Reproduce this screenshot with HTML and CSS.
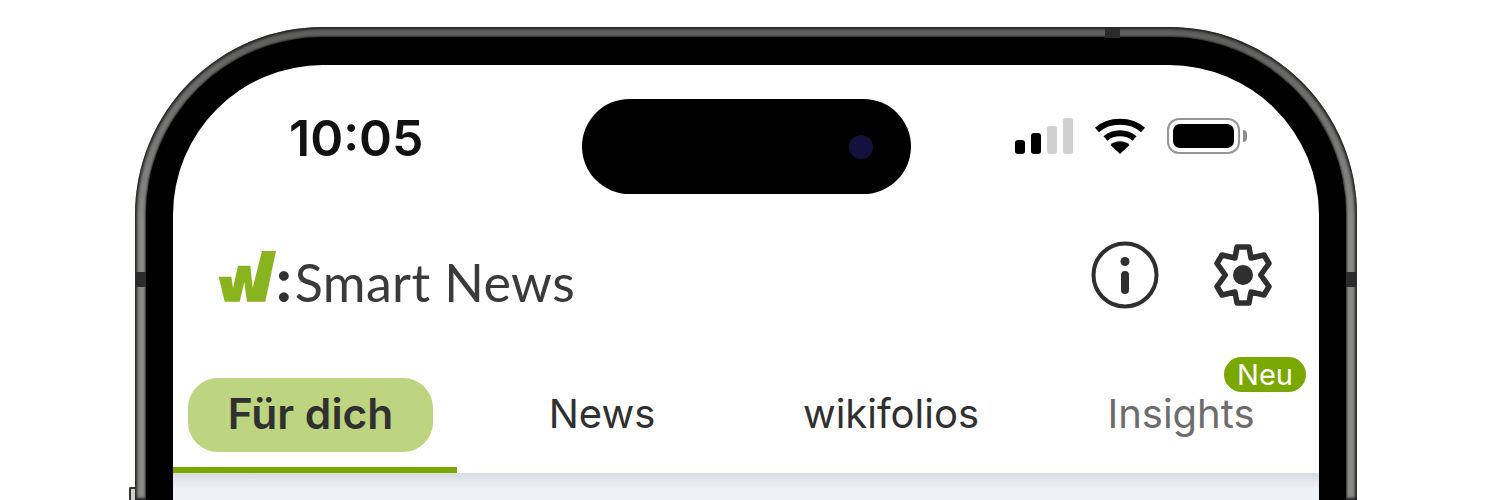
FILE: index.html
```html
<!DOCTYPE html>
<html lang="de">
<head>
    <meta charset="UTF-8">
    <title>Smart News</title>
    <link rel="stylesheet" href="styles.css">
</head>
<body>
    <div class="phone">
        <span class="notch notch-top"></span>
        <span class="notch notch-left"></span>
        <span class="notch notch-right"></span>
        <div class="bezel">
            <div class="screen">
                <div class="status-bar">
                    <div class="time">10:05</div>
                    <div class="island"><span class="camera"></span></div>
                    <div class="status-icons">
                        <div class="signal">
                            <span class="bar bar-1"></span>
                            <span class="bar bar-2"></span>
                            <span class="bar bar-3"></span>
                            <span class="bar bar-4"></span>
                        </div>
                        <svg class="wifi" viewBox="0 0 52 36" width="52" height="36">
                            <path d="M3 12 C15 1 37 1 49 12" fill="none" stroke="#000" stroke-width="6"/>
                            <path d="M11.500 20.500 C19 13.500 33 13.500 40.500 20.500" fill="none" stroke="#000" stroke-width="6"/>
                            <path d="M16.500 27 C21 22 31 22 35.500 27 L26 36 Z" fill="#000"/>
                        </svg>
                        <div class="battery"><span class="battery-level"></span></div>
                        <span class="battery-nub"></span>
                    </div>
                </div>

                <header class="app-header">
                    <div class="logo">
                        <svg class="logo-mark" viewBox="0 0 58 51" width="58" height="51">
                            <polygon points="0.700,25.700 13.300,25.700 15,37.300 20,14.700 32.300,14.700 34.700,36.700 44,0 58,0 47.300,50.700 29,50.700 26.300,31.300 21.700,50.700 6.700,50.700" fill="#8ab41f"/>
                        </svg>
                        <span class="logo-colon">:</span>
                        <span class="logo-text">Smart News</span>
                    </div>
                    <div class="header-actions">
                        <svg class="icon-info" viewBox="0 0 68 68" width="68" height="68">
                            <circle cx="34" cy="34" r="31.500" fill="none" stroke="#2f2f2f" stroke-width="4"/>
                            <circle cx="34" cy="20.500" r="4.500" fill="#2f2f2f"/>
                            <rect x="30" y="30" width="8" height="23" rx="4" fill="#2f2f2f"/>
                        </svg>
                        <svg class="icon-gear" viewBox="0 0 70 70" width="70" height="70">
                            <polygon points="29,7 41,7 43,18 56,15 61,23.500 52.700,35 61,46.500 56,55 43,52 41,63 29,63 27,52 14,55 9,46.500 17.300,35 9,23.500 14,15 27,18" fill="none" stroke="#2f2f2f" stroke-width="5.500" stroke-linejoin="round"/>
                            <circle cx="35" cy="35" r="10" fill="#2f2f2f"/>
                        </svg>
                    </div>
                </header>

                <nav class="tabs">
                    <a class="tab tab-active"><span class="tab-pill">Für dich</span></a>
                    <a class="tab">News</a>
                    <a class="tab">wikifolios</a>
                    <a class="tab tab-insights">Insights<span class="badge">Neu</span></a>
                </nav>

                <div class="feed"></div>
            </div>
        </div>
    </div>
    <span class="side-button"></span>
</body>
</html>
```

FILE: styles.css
```css
html, body {
    height: 500px;
    overflow: hidden;
}
body {
    margin: 0;
    background-color: white;
    font-family: Inter, "Noto Sans", sans-serif;
    position: relative;
}
.phone {
    position: relative;
    box-sizing: border-box;
    width: 1222px;
    height: 473px;
    margin: 27px 0 0 135px;
    padding: 10px 11px 0;
    border-radius: 188px 188px 0 0;
    background: linear-gradient(#5e5e5c, #6e6e6c 60px, #8a8a88 200px);
    box-shadow: inset 0 0 3px 2px #1e1e1e;
}
.notch {
    position: absolute;
    background-color: #2b2b2b;
}
.notch-top {
    top: 0;
    left: 970px;
    width: 15px;
    height: 11px;
}
.notch-left {
    top: 245px;
    left: 0;
    width: 11px;
    height: 15px;
}
.notch-right {
    top: 245px;
    right: 0;
    width: 11px;
    height: 15px;
}
.side-button {
    position: absolute;
    left: 129px;
    top: 487px;
    box-sizing: border-box;
    width: 6px;
    height: 13px;
    background-color: #cfcfcf;
    border: 2px solid #333;
    border-right: 0;
    border-bottom: 0;
    border-radius: 2px 0 0 0;
}
.bezel {
    box-sizing: border-box;
    height: 100%;
    padding: 28px 27px 0;
    background-color: black;
    border-radius: 177px 177px 0 0;
    box-shadow: 0 0 2px 1px #2a2a2a;
}
.screen {
    height: 100%;
    background-color: white;
    border-radius: 150px 150px 0 0;
    overflow: hidden;
}

/* status bar */
.status-bar {
    display: grid;
    grid-template-columns: 1fr 329px 1fr;
    padding-top: 34px;
    height: 95px;
    align-items: start;
}
.time {
    padding-left: 116px;
    margin-top: 9px;
    font-size: 50px;
    font-weight: 600;
    color: #111;
}
.island {
    position: relative;
    height: 95px;
    background-color: black;
    border-radius: 48px;
}
.camera {
    position: absolute;
    right: 38px;
    top: 36px;
    width: 24px;
    height: 24px;
    border-radius: 50%;
    background-color: #14113f;
}
.status-icons {
    display: flex;
    align-items: flex-end;
    padding-left: 104px;
    margin-top: 19px;
    height: 36px;
}
.signal {
    display: flex;
    align-items: flex-end;
    gap: 6px;
    margin-right: 21px;
}
.bar {
    width: 10px;
    border-radius: 3px;
    background-color: black;
}
.bar-1 { height: 14px; }
.bar-2 { height: 21px; }
.bar-3 { height: 28px; background-color: #cfcfcf; }
.bar-4 { height: 36px; background-color: #cfcfcf; }
.wifi {
    margin-right: 21px;
}
.battery {
    box-sizing: border-box;
    width: 73px;
    height: 36px;
    padding: 4px;
    border: 2px solid #969696;
    border-radius: 12px;
}
.battery-level {
    display: block;
    height: 100%;
    border-radius: 7px;
    background-color: black;
}
.battery-nub {
    width: 4px;
    height: 12px;
    margin: 0 0 12px 3px;
    background-color: #8f8f8f;
    border-radius: 0 6px 6px 0;
}

/* app header */
.app-header {
    display: flex;
    justify-content: space-between;
    align-items: flex-start;
    padding: 46px 41px 0 45px;
    height: 184px;
    box-sizing: border-box;
}
.logo {
    display: flex;
    align-items: baseline;
    margin-top: 11px;
}
.logo-mark {
    display: block;
}
.logo-colon {
    font-family: Lato, sans-serif;
    font-size: 60px;
    font-weight: 900;
    line-height: 51px;
    margin: 0 3px 0 0;
    color: #333;
}
.logo-text {
    font-family: Lato, sans-serif;
    font-size: 52px;
    font-weight: 400;
    line-height: 51px;
    letter-spacing: 0.4px;
    color: #3a3a3a;
}
.header-actions {
    display: flex;
    align-items: center;
    gap: 49px;
}

/* tabs */
.tabs {
    display: grid;
    grid-template-columns: 284px 290px 288px 284px;
    height: 95px;
}
.tab {
    position: relative;
    box-sizing: border-box;
    height: 95px;
    padding-bottom: 24px;
    display: flex;
    align-items: center;
    justify-content: center;
    font-size: 40px;
    color: #303030;
}
.tab-active {
    justify-content: flex-start;
    padding-left: 15px;
    border-bottom: 6px solid #7aa800;
    padding-bottom: 15px;
}
.tab-pill {
    box-sizing: border-box;
    width: 245px;
    height: 74px;
    line-height: 72px;
    text-align: center;
    border-radius: 30px;
    background-color: #bdd480;
    font-size: 42.500px;
    font-weight: 600;
}
.tab-insights {
    padding-left: 8px;
    color: #6c6c6c;
}
.badge {
    position: absolute;
    top: -21px;
    right: 13px;
    padding: 0 13px;
    height: 35px;
    line-height: 35px;
    border-radius: 18px;
    background-color: #7aa800;
    color: white;
    font-size: 29px;
}

/* feed below tabs */
.feed {
    height: 200px;
    background: linear-gradient(#d6dce1, #edf2f9 16px, #eff3fa);
}
```
